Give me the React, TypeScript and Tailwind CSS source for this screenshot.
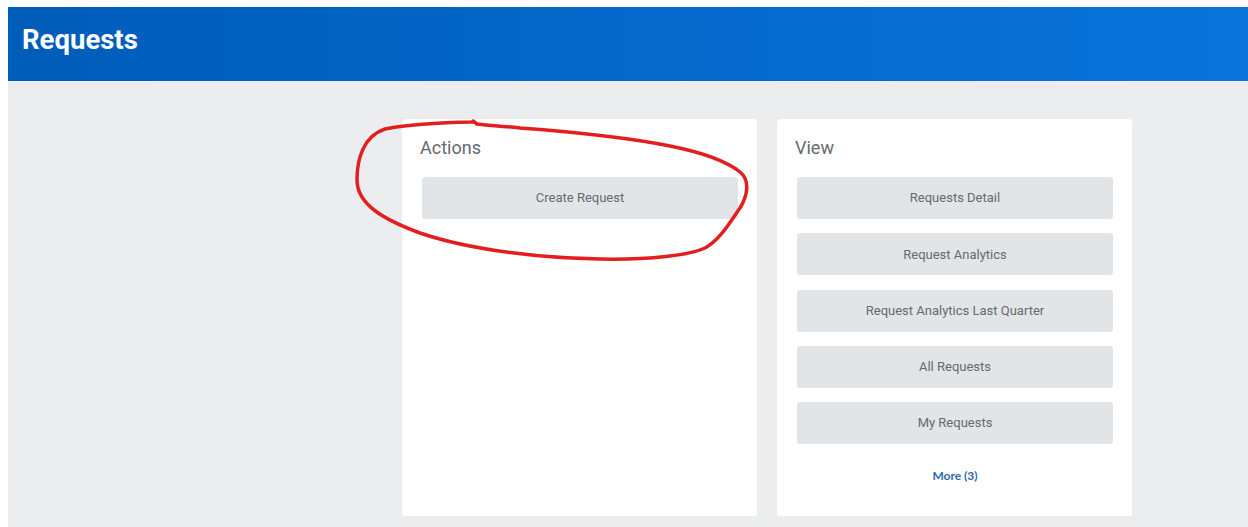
import React from "react";

const viewLinks = [
  "Requests Detail",
  "Request Analytics",
  "Request Analytics Last Quarter",
  "All Requests",
  "My Requests",
];

function TaskButton({ label }: { label: string }) {
  return (
    <button className="flex h-[42px] w-full shrink-0 items-center justify-center rounded-[3px] bg-[#e1e5e8] text-[13px] text-[#666a6e]">
      {label}
    </button>
  );
}

function Card({ title, children }: { title: string; children: React.ReactNode }) {
  return (
    <section className="flex h-[397px] w-[355px] flex-col rounded-[3px] bg-white pl-[20px] pr-[19px] pt-[17px]">
      <h2 className="-ml-[2px] text-[18px] leading-[24px] text-[#656a6e]">{title}</h2>
      <div className="mt-[17px] flex flex-col gap-[14.25px]">{children}</div>
    </section>
  );
}

export default function App() {
  return (
    <div
      className="relative h-[527px] w-[1248px] overflow-hidden bg-white pl-[8px] pt-[7px]"
      style={{ fontFamily: "Roboto, 'Noto Sans', Arial, sans-serif" }}
    >
      <div className="flex h-[520px] flex-col bg-[#ecedef]">
        <header className="h-[74px] bg-gradient-to-r from-[#005cb9] to-[#0a74db] pl-[14px] pt-[17px]">
          <h1 className="text-[27.5px] font-bold leading-[32px] text-white">Requests</h1>
        </header>

        <main className="flex gap-[20px] pl-[394px] pt-[38px]">
          <Card title="Actions">
            <TaskButton label="Create Request" />
          </Card>

          <Card title="View">
            {viewLinks.map((label) => (
              <TaskButton key={label} label={label} />
            ))}
            <a
              href="#"
              className="mt-[9px] self-center text-[12px] font-bold text-[#2b6cae]"
              style={{ fontFamily: "Lato, 'Noto Sans', sans-serif" }}
            >
              More (3)
            </a>
          </Card>
        </main>
      </div>

      {/* hand-drawn highlight loop around the Create Request action */}
      <svg
        className="pointer-events-none absolute left-0 top-0"
        width="1248"
        height="527"
        viewBox="0 0 1248 527"
        fill="none"
      >
        <path
          d="M473 122 C 440 122.5, 410 124, 385 129 C 363 136, 357 160, 357 180 C 357 205, 385 220, 420 233 C 470 250, 540 258, 600 259 C 650 260, 690 255, 705 248 C 720 240, 730 222, 740 208 C 748 195, 750 180, 740 172 C 725 160, 700 152, 670 146 C 620 136, 560 131, 520 128 C 500 126, 485 125, 477 124 L 473 121"
          stroke="#e41e1e"
          strokeWidth="3.5"
          strokeLinecap="round"
          strokeLinejoin="round"
        />
      </svg>
    </div>
  );
}
